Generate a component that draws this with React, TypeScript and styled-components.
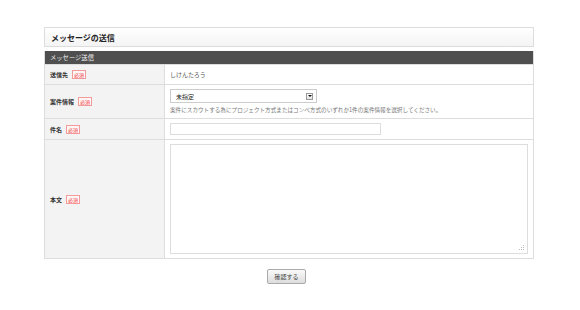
import styled, { createGlobalStyle } from 'styled-components'

const Global = createGlobalStyle`
  body {
    margin: 0;
    background: #fff;
    font-family: "Noto Sans CJK JP", "Liberation Sans", sans-serif;
    color: #333;
  }
`

const Page = styled.div`
  width: 490px;
  margin: 0 0 0 44px;
  padding-top: 27px;
`

const TitleBox = styled.div`
  height: 18px;
  border: 1px solid #ddd;
  background: linear-gradient(#fff, #f4f4f4);
  display: flex;
  align-items: center;
  padding-left: 6px;
  font-size: 8px;
  font-weight: bold;
  color: #222;
`

const Section = styled.div`
  margin-top: 4px;
  border: 1px solid #ddd;
  border-top: none;
`

const SectionHead = styled.div`
  height: 13px;
  background: #4f4f4f;
  color: #eee;
  font-size: 6.3px;
  display: flex;
  align-items: center;
  padding-left: 5px;
`

const Row = styled.div<{ $h: number }>`
  display: grid;
  grid-template-columns: 120px 1fr;
  height: ${(p) => p.$h}px;
  border-top: 1px solid #ddd;
  &:first-of-type {
    border-top: none;
  }
`

const Label = styled.div`
  background: #f3f3f3;
  border-right: 1px solid #ddd;
  display: flex;
  align-items: center;
  gap: 4px;
  padding-left: 5px;
  font-size: 6px;
  font-weight: bold;
  color: #333;
`

const Req = styled.span`
  width: 14px;
  height: 9px;
  box-sizing: border-box;
  border: 1px solid #f39a9a;
  background: #fff6f6;
  color: #e44;
  font-size: 5px;
  font-weight: normal;
  display: flex;
  align-items: center;
  justify-content: center;
`

const Cell = styled.div<{ $top?: boolean }>`
  display: flex;
  flex-direction: column;
  justify-content: ${(p) => (p.$top ? 'flex-start' : 'center')};
  padding: ${(p) => (p.$top ? '4px' : '0')} 5px 0 5px;
  font-size: 6px;
  color: #555;
`

const Select = styled.div`
  width: 147px;
  height: 14px;
  border: 1px solid #ccc;
  background: #fff;
  display: flex;
  align-items: center;
  justify-content: space-between;
  padding: 0 3px 0 5px;
  box-sizing: border-box;
  font-size: 6px;
  color: #222;
`

const Arrow = styled.span`
  width: 7px;
  height: 7px;
  border: 1px solid #999;
  background: linear-gradient(#fff, #e4e4e4);
  display: flex;
  align-items: center;
  justify-content: center;
  box-sizing: border-box;
  &::after {
    content: '';
    border-left: 2px solid transparent;
    border-right: 2px solid transparent;
    border-top: 2px solid #111;
  }
`

const Note = styled.div`
  margin-top: 3px;
  font-size: 5.6px;
  color: #777;
  white-space: nowrap;
`

const Input = styled.div`
  width: 209px;
  height: 10px;
  border: 1px solid #ddd;
  background: #fff;
`

const TextArea = styled.div`
  height: 108px;
  border: 1px solid #ddd;
  background: #fff;
  position: relative;
`

const Grip = styled.svg`
  position: absolute;
  right: 2px;
  bottom: 2px;
`

const Actions = styled.div`
  display: flex;
  justify-content: center;
  margin-top: 10px;
  padding-right: 5px;
`

const Button = styled.button`
  width: 39px;
  height: 15px;
  padding: 0;
  border: 1px solid #aaa;
  border-radius: 2px;
  background: linear-gradient(#fafafa, #ddd);
  font-family: inherit;
  font-size: 6px;
  color: #444;
`

export default function App() {
  return (
    <>
      <Global />
      <Page>
        <TitleBox>メッセージの送信</TitleBox>
        <Section>
          <SectionHead>メッセージ送信</SectionHead>
          <Row $h={19}>
            <Label>
              送信先<Req>必須</Req>
            </Label>
            <Cell>しけんたろう</Cell>
          </Row>
          <Row $h={33}>
            <Label>
              案件情報<Req>必須</Req>
            </Label>
            <Cell>
              <Select>
                未指定
                <Arrow />
              </Select>
              <Note>
                案件にスカウトする為にプロジェクト方式またはコンペ方式のいずれか1件の案件情報を選択してください。
              </Note>
            </Cell>
          </Row>
          <Row $h={20}>
            <Label>
              件名<Req>必須</Req>
            </Label>
            <Cell>
              <Input />
            </Cell>
          </Row>
          <Row $h={118}>
            <Label>
              本文<Req>必須</Req>
            </Label>
            <Cell $top>
              <TextArea>
                <Grip width="6" height="6" viewBox="0 0 6 6">
                  <g fill="#bbb">
                    <rect x="4" y="0" width="1" height="1" />
                    <rect x="2" y="2" width="1" height="1" />
                    <rect x="4" y="2" width="1" height="1" />
                    <rect x="0" y="4" width="1" height="1" />
                    <rect x="2" y="4" width="1" height="1" />
                    <rect x="4" y="4" width="1" height="1" />
                  </g>
                </Grip>
              </TextArea>
            </Cell>
          </Row>
        </Section>
        <Actions>
          <Button>確認する</Button>
        </Actions>
      </Page>
    </>
  )
}
